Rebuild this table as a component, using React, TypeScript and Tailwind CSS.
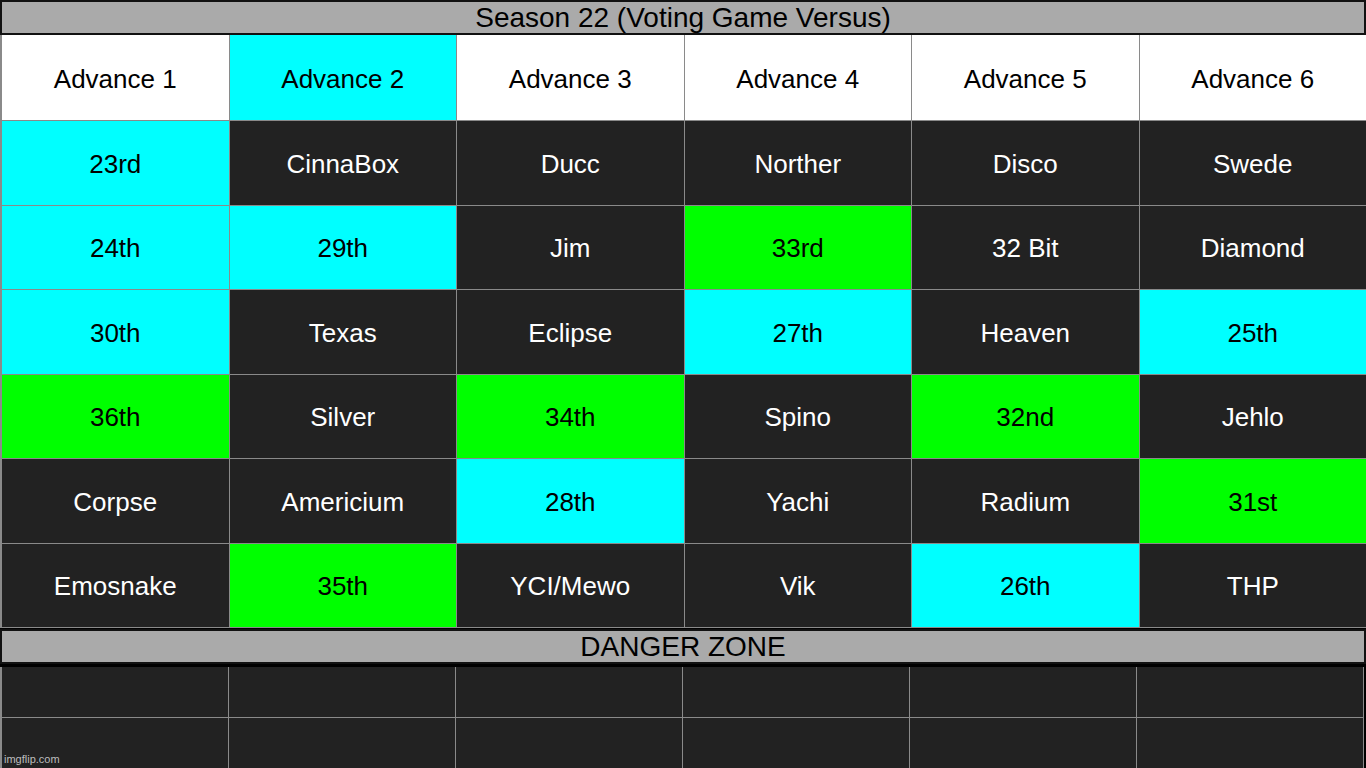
import React from 'react';

type Tone = 'w' | 'c' | 'g' | 'd';

const toneClass: Record<Tone, string> = {
  w: 'bg-white text-black',
  c: 'bg-[#00ffff] text-black',
  g: 'bg-[#00ff00] text-black',
  d: 'bg-[#222222] text-white',
};

const rows: [string, Tone][][] = [
  [['Advance 1', 'w'], ['Advance 2', 'c'], ['Advance 3', 'w'], ['Advance 4', 'w'], ['Advance 5', 'w'], ['Advance 6', 'w']],
  [['23rd', 'c'], ['CinnaBox', 'd'], ['Ducc', 'd'], ['Norther', 'd'], ['Disco', 'd'], ['Swede', 'd']],
  [['24th', 'c'], ['29th', 'c'], ['Jim', 'd'], ['33rd', 'g'], ['32 Bit', 'd'], ['Diamond', 'd']],
  [['30th', 'c'], ['Texas', 'd'], ['Eclipse', 'd'], ['27th', 'c'], ['Heaven', 'd'], ['25th', 'c']],
  [['36th', 'g'], ['Silver', 'd'], ['34th', 'g'], ['Spino', 'd'], ['32nd', 'g'], ['Jehlo', 'd']],
  [['Corpse', 'd'], ['Americium', 'd'], ['28th', 'c'], ['Yachi', 'd'], ['Radium', 'd'], ['31st', 'g']],
  [['Emosnake', 'd'], ['35th', 'g'], ['YCI/Mewo', 'd'], ['Vik', 'd'], ['26th', 'c'], ['THP', 'd']],
];

const Bar: React.FC<{ label: string; className?: string }> = ({ label, className = '' }) => (
  <div className={`flex items-center justify-center bg-[#aaaaaa] border-2 border-[#111] text-black text-[28px] leading-none ${className}`}>
    {label}
  </div>
);

const App: React.FC = () => {
  return (
    <div
      className="relative w-[1366px] h-[768px] bg-black flex flex-col overflow-hidden"
      style={{ fontFamily: '"Liberation Sans", Arial, sans-serif' }}
    >
      <Bar label="Season 22 (Voting Game Versus)" className="h-[35px]" />

      <div className="grid grid-cols-6 grid-rows-[85px_repeat(6,1fr)] gap-px bg-[#8a8a8a] pl-[2px] pb-px h-[593px]">
        {rows.flat().map(([text, tone], i) => (
          <div key={i} className={`flex items-center justify-center text-[26px] pt-[3px] ${toneClass[tone]}`}>
            {text}
          </div>
        ))}
      </div>

      <Bar label="DANGER ZONE" className="h-[35px] mt-px" />

      <div className="flex-1 pt-[3px] pr-[2px] bg-black">
        <div className="grid grid-cols-6 grid-rows-2 gap-px bg-[#8a8a8a] pl-[2px] pr-px h-full">
          {Array.from({ length: 12 }).map((_, i) => (
            <div key={i} className="bg-[#222222]" />
          ))}
        </div>
      </div>

      <div className="absolute left-[4px] bottom-[3px] text-[11px] text-[#bdbdbd] leading-none">
        imgflip.com
      </div>
    </div>
  );
};

export default App;
